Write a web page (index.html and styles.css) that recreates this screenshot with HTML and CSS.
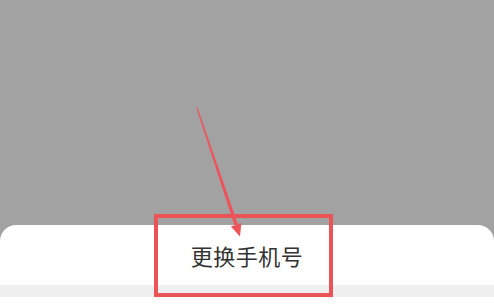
FILE: index.html
```html
<!DOCTYPE html>
<html lang="zh">
<head>
<meta charset="utf-8">
<link rel="stylesheet" href="styles.css">
</head>
<body>
<div class="screen">
  <div class="sheet">
    <div class="option">更换手机号</div>
    <div class="divider"></div>
    <div class="cancel"></div>
  </div>
  <svg class="annotation" width="494" height="306" viewBox="0 0 494 306">
    <polygon points="197.57,107.81 196.43,108.19 234.4,225.2 237.8,224.1" fill="#f0525a"/>
    <polygon points="240,236.5 230.9,226.4 241.3,222.9" fill="#f0525a"/>
    <rect x="156" y="216" width="175" height="79" fill="none" stroke="#ea5457" stroke-width="4"/>
  </svg>
</div>
</body>
</html>
```
FILE: styles.css
```css
html, body {
  margin: 0;
  padding: 0;
}
body {
  width: 494px;
  height: 306px;
  overflow: hidden;
  background: #a2a2a3;
  font-family: "Noto Sans CJK SC", "Noto Sans", sans-serif;
}
.screen {
  position: relative;
  width: 494px;
  height: 306px;
  display: flex;
  flex-direction: column;
  justify-content: flex-end;
}
.sheet {
  background: #ffffff;
  border-radius: 16px 16px 0 0;
  display: flex;
  flex-direction: column;
}
.option {
  height: 60px;
  display: flex;
  align-items: center;
  justify-content: center;
  font-size: 22px;
  color: #333333;
  letter-spacing: 0.5px;
}
.divider {
  height: 12px;
  background: #efefef;
}
.cancel {
  height: 9px;
  background: #ffffff;
}
.annotation {
  position: absolute;
  left: 0;
  top: 0;
}
```
